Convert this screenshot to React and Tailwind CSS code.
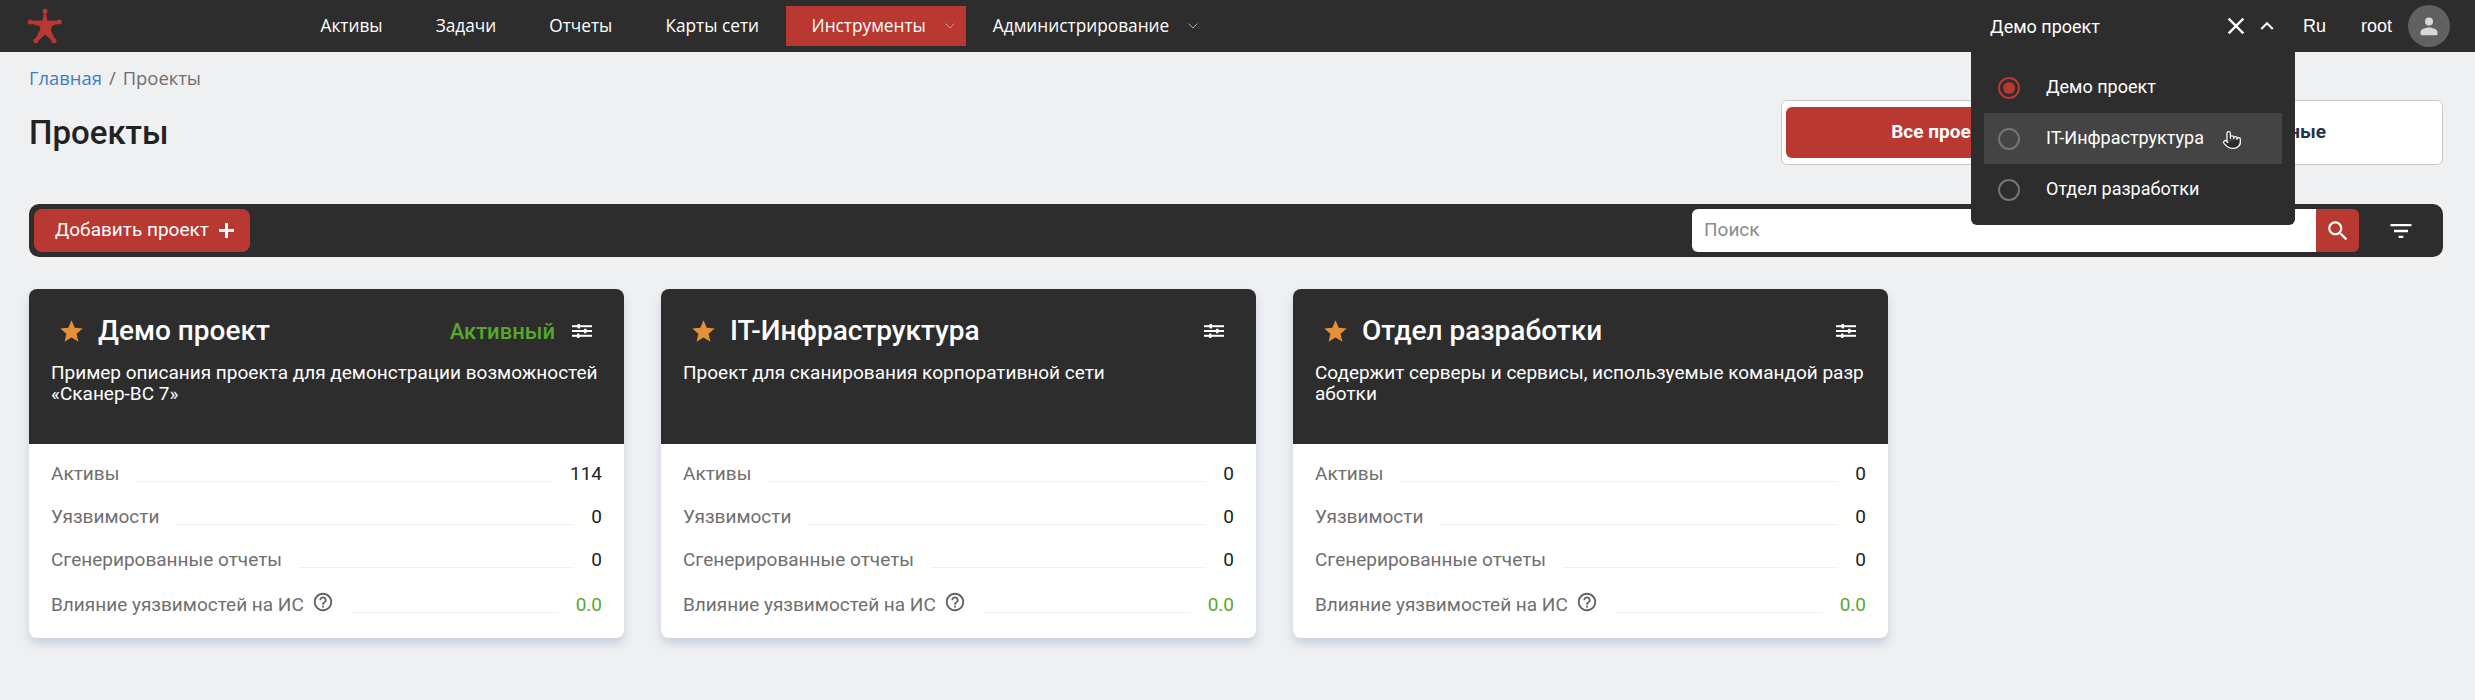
import React from "react";
import { Pointer } from "lucide-react";

const P = {
  filter: "M10 18h4v-2h-4v2zM3 6v2h18V6H3zm3 7h12v-2H6v2z",
  search: "M15.5 14h-.79l-.28-.27C15.41 12.59 16 11.11 16 9.5 16 5.91 13.09 3 9.5 3S3 5.91 3 9.5 5.91 16 9.5 16c1.61 0 3.09-.59 4.23-1.57l.27.28v.79l5 4.99L20.49 19l-4.99-5zm-6 0C7.01 14 5 11.99 5 9.5S7.01 5 9.5 5 14 7.01 14 9.5 11.99 14 9.5 14z",
  close: "M19 6.41L17.59 5 12 10.59 6.41 5 5 6.41 10.59 12 5 17.59 6.41 19 12 13.41 17.59 19 19 17.59 13.41 12z",
  up: "M12 8l-6 6 1.41 1.41L12 10.83l4.59 4.58L18 14z",
  star: "M12 17.27L18.18 21l-1.64-7.03L22 9.24l-7.19-.61L12 2 9.19 8.63 2 9.24l5.46 4.73L5.82 21z",
  help: "M11 18h2v-2h-2v2zm1-16C6.48 2 2 6.48 2 12s4.48 10 10 10 10-4.48 10-10S17.52 2 12 2zm0 18c-4.41 0-8-3.59-8-8s3.59-8 8-8 8 3.59 8 8-3.59 8-8 8zm0-14c-2.21 0-4 1.79-4 4h2c0-1.1.9-2 2-2s2 .9 2 2c0 2-3 1.75-3 5h2c0-2.25 3-2.5 3-5 0-2.21-1.79-4-4-4z",
};

function Icon({ d, className }) {
  return (
    <svg viewBox="0 0 24 24" className={className} fill="currentColor" aria-hidden="true">
      <path d={d} />
    </svg>
  );
}

function Tune() {
  return (
    <svg viewBox="0 0 20 14" className="mr-[10px] h-[14px] w-[20px] text-white" fill="currentColor" aria-hidden="true">
      <rect x="0" y="1.200" width="20" height="2" />
      <rect x="0" y="6" width="20" height="2" />
      <rect x="0" y="10.800" width="20" height="2" />
      <rect x="5.500" y="0" width="2.500" height="4.400" />
      <rect x="12" y="4.800" width="2.500" height="4.400" />
      <rect x="5" y="9.600" width="2.500" height="4.400" />
    </svg>
  );
}

function Plus() {
  return (
    <svg viewBox="0 0 15 15" className="ml-[10px] h-[15px] w-[15px]" fill="currentColor" aria-hidden="true">
      <rect x="6" y="0" width="3" height="15" />
      <rect x="0" y="6" width="15" height="3" />
    </svg>
  );
}

function Chevron() {
  return (
    <svg viewBox="0 0 10 6" className="ml-[19px] h-[6px] w-[10px] text-[#b0a6a6]" fill="none" stroke="currentColor" strokeWidth="1" aria-hidden="true">
      <path d="M0.5 0.500L5 5L9.500 0.500" />
    </svg>
  );
}

function Logo() {
  return (
    <svg viewBox="0 0 36 36" className="ml-[27px] h-[36px] w-[36px] text-[#b93832]" fill="currentColor" aria-hidden="true">
      <circle cx="18" cy="3.300" r="2.500" />
      <circle cx="3.300" cy="14" r="2.500" />
      <circle cx="32.300" cy="14" r="2.500" />
      <circle cx="8.800" cy="32.700" r="2.500" />
      <circle cx="27" cy="32.700" r="2.500" />
      <path d="M17.300 4L18.700 4L20.500 12.500L32 12.800L32.500 15.200L25 18L23.800 22L28 31.500L26 33.500L18 26.500L10.500 33.500L8 31.500L13.500 21L12.500 18L3.500 15.500L3.500 12.800L15.500 12.500Z" />
    </svg>
  );
}

function Radio({ checked }) {
  return (
    <span className={`flex h-[22px] w-[22px] shrink-0 items-center justify-center rounded-full border-2 ${checked ? "border-[#b93832]" : "border-[#757575]"}`}>
      {checked && <span className="h-[12px] w-[12px] rounded-full bg-[#b93832]" />}
    </span>
  );
}

function Row({ label, value, green, help, tall }) {
  return (
    <div className={`flex items-end ${tall ? "h-[45px]" : "h-[43px]"}`}>
      <span className="text-[19px] leading-[28px] text-[#6f6f6f]">{label}</span>
      {help && <Icon d={P.help} className="mb-[6px] ml-[8px] h-[22px] w-[22px] text-[#5f5f5f]" />}
      <span className="mx-[17px] mb-[6px] h-px flex-1 bg-[#eff0f2]" />
      <span className={`text-[19px] leading-[28px] ${green ? "text-[#5aa92f]" : "text-[#222222]"}`}>{value}</span>
    </div>
  );
}

function Card({ title, desc, active, assets }) {
  return (
    <div className="w-[595px] overflow-hidden rounded-[8px] bg-white shadow-[0_6px_10px_0_rgba(170,185,205,0.55)]">
      <div className="h-[155px] bg-[#2d2d2d] px-[22px] pt-[23px] text-white">
        <div className="flex h-[38px] items-center">
          <Icon d={P.star} className="ml-[7px] h-[27px] w-[27px] text-[#e69036]" />
          <span className="ml-[13px] text-[28px] font-medium leading-[38px]">{title}</span>
          <span className="flex-1" />
          {active && <span className="mr-[17px] text-[22px] font-medium text-[#55a82a]">Активный</span>}
          <Tune />
        </div>
        <p className="mt-[12px] break-all text-[19px] leading-[21px]">{desc}</p>
      </div>
      <div className="px-[22px] pt-[1px] pb-[19px]">
        <Row label="Активы" value={assets} />
        <Row label="Уязвимости" value="0" />
        <Row label="Сгенерированные отчеты" value="0" />
        <Row label="Влияние уязвимостей на ИС" value="0.0" green help tall />
      </div>
    </div>
  );
}

export default function App() {
  return (
    <div className="relative min-h-[700px] bg-[#eff0f2] font-['Roboto',sans-serif] text-[#222222]">
      <header className="flex h-[52px] items-center bg-[#2d2d2d] text-white">
        <Logo />
        <nav className="ml-[231px] flex h-[40px] items-center font-['Open_Sans',sans-serif] text-[17.28px]">
          <a className="px-[26.5px]">Активы</a>
          <a className="px-[26.5px]">Задачи</a>
          <a className="px-[26.5px]">Отчеты</a>
          <a className="px-[26.5px]">Карты сети</a>
          <a className="flex h-[40px] items-center bg-[#b93832] pl-[26px] pr-[11px]">Инструменты<Chevron /></a>
          <a className="ml-[27px] flex items-center">Администрирование<Chevron /></a>
        </nav>
        <div className="ml-auto flex items-center">
          <span className="text-[18px]">Демо проект</span>
          <Icon d={P.close} className="ml-[122px] h-[28px] w-[28px]" />
          <Icon d={P.up} className="ml-[4px] h-[26px] w-[26px]" />
          <span className="ml-[23px] font-['Liberation_Sans',sans-serif] text-[18px]">Ru</span>
          <span className="ml-[35px] font-['Liberation_Sans',sans-serif] text-[18px]">root</span>
          <span className="ml-[16px] mr-[25px] flex h-[42px] w-[42px] items-center justify-center rounded-full bg-[#616161]">
            <svg viewBox="0 0 24 24" className="h-[24px] w-[24px] text-[#d8d8d8]" fill="currentColor" aria-hidden="true">
              <circle cx="12" cy="7.500" r="4" />
              <path d="M3.500 20v-2c0-3 5.500-4.500 8.500-4.500s8.500 1.500 8.500 4.500v2c0 .8-.5 1.200-1.200 1.200H4.700c-.7 0-1.200-.4-1.200-1.200z" />
            </svg>
          </span>
        </div>
      </header>

      <main className="pl-[29px] pr-[32px]">
        <div className="pt-[15px] font-['Open_Sans',sans-serif] text-[18.4px] leading-[22px] text-[#6f6f6f]">
          <a className="text-[#3f7cc4]">Главная</a>
          <span className="mx-[7px]">/</span>
          <span>Проекты</span>
        </div>

        <div className="mt-[11px] flex items-center justify-between">
          <h1 className="text-[33px] font-medium leading-[40px] text-[#222222]">Проекты</h1>
          <div className="flex h-[65px] w-[662px] rounded-[6px] border border-[#c8c8c8] bg-white px-[4px] py-[6px] text-[19px] font-bold">
            <span className="flex flex-1 items-center justify-center rounded-[6px] bg-[#b93832] text-white">Все проекты</span>
            <span className="flex flex-1 items-center justify-center text-[#253349]">Избранные</span>
          </div>
        </div>

        <div className="mt-[39px] flex h-[53px] items-center rounded-[10px] bg-[#2d2d2d] p-[5px]">
          <button className="flex h-[43px] w-[216px] items-center rounded-[8px] bg-[#b93832] pl-[21px] text-[19px] text-white">
            Добавить проект
            <Plus />
          </button>
          <div className="ml-auto flex h-[43px] w-[667px] overflow-hidden rounded-[6px]">
            <input className="min-w-0 flex-1 bg-white px-[12px] text-[19px] outline-none placeholder:text-[#8a8a8a]" placeholder="Поиск" readOnly />
            <span className="flex w-[43px] items-center justify-center bg-[#b93832] text-white">
              <Icon d={P.search} className="h-[26px] w-[26px]" />
            </span>
          </div>
          <Icon d={P.filter} className="ml-[28px] mr-[23px] h-[28px] w-[28px] text-white" />
        </div>

        <div className="mt-[32px] flex gap-[37px]">
          <Card title="Демо проект" desc="Пример описания проекта для демонстрации возможностей «Сканер-ВС 7»" active assets="114" />
          <Card title="IT-Инфраструктура" desc="Проект для сканирования корпоративной сети" assets="0" />
          <Card title="Отдел разработки" desc="Содержит серверы и сервисы, используемые командой разработки" assets="0" />
        </div>
      </main>

      <div className="absolute left-[1971px] top-[52px] h-[173px] w-[324px] rounded-b-[6px] bg-[#2d2d2d] px-[13px] pt-[10px] text-[18px] text-white">
        <div className="flex h-[51px] items-center gap-[26px] pl-[14px]"><Radio checked /><span className="pb-[2px]">Демо проект</span></div>
        <div className="relative flex h-[51px] items-center gap-[26px] bg-[#444444] pl-[14px]">
          <Radio /><span className="pb-[2px]">IT-Инфраструктура</span>
          <Pointer className="absolute left-[238px] top-[17px] h-[20px] w-[20px] fill-[#2d2d2d] text-white" strokeWidth={1.5} />
        </div>
        <div className="flex h-[51px] items-center gap-[26px] pl-[14px]"><Radio /><span className="pb-[2px]">Отдел разработки</span></div>
      </div>
    </div>
  );
}
